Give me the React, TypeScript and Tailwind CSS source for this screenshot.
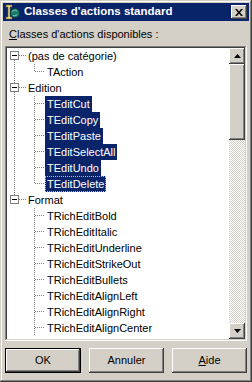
import React from "react";

const font = { fontFamily: '"Liberation Sans", Arial, sans-serif' };

type Node = { label: string; selected?: boolean; children: { label: string; selected?: boolean; focus?: boolean }[] };

const tree: Node[] = [
  { label: "(pas de catégorie)", children: [{ label: "TAction" }] },
  {
    label: "Edition",
    children: [
      { label: "TEditCut", selected: true },
      { label: "TEditCopy", selected: true },
      { label: "TEditPaste", selected: true },
      { label: "TEditSelectAll", selected: true },
      { label: "TEditUndo", selected: true },
      { label: "TEditDelete", selected: true, focus: true },
    ],
  },
  {
    label: "Format",
    children: [
      { label: "TRichEditBold" },
      { label: "TRichEditItalic" },
      { label: "TRichEditUnderline" },
      { label: "TRichEditStrikeOut" },
      { label: "TRichEditBullets" },
      { label: "TRichEditAlignLeft" },
      { label: "TRichEditAlignRight" },
      { label: "TRichEditAlignCenter" },
    ],
  },
];

const dot = { stroke: "#808080", strokeWidth: 1, strokeDasharray: "1 1" };

const RootGuide = ({ first, last }: { first: boolean; last: boolean }) => (
  <svg width="19" height="16" className="shrink-0">
    {!first && <line x1="7.5" y1="0" x2="7.5" y2="3" {...dot} />}
    {!last && <line x1="7.5" y1="12" x2="7.5" y2="16" {...dot} />}
    <line x1="12" y1="7.5" x2="19" y2="7.5" {...dot} />
    <rect x="3.5" y="3.5" width="8" height="8" fill="#fff" stroke="#808080" />
    <line x1="5" y1="7.5" x2="10" y2="7.5" stroke="#000" />
  </svg>
);

const ChildGuide = ({ rootLast, last }: { rootLast: boolean; last: boolean }) => (
  <svg width="38" height="16" className="shrink-0">
    {!rootLast && <line x1="7.5" y1="0" x2="7.5" y2="16" {...dot} />}
    <line x1="27.5" y1="0" x2="27.5" y2={last ? 8 : 16} {...dot} />
    <line x1="28" y1="7.5" x2="37" y2="7.5" {...dot} />
  </svg>
);

const Label = ({ text, selected, focus }: { text: string; selected?: boolean; focus?: boolean }) => (
  <span
    className={
      "h-[16px] px-[2px] flex items-center whitespace-nowrap leading-none " +
      (selected ? "bg-[#0a246a] text-white " : "text-black ") +
      (focus ? "outline outline-1 outline-dotted outline-[#d4c060] -outline-offset-1" : "")
    }
  >
    {text}
  </span>
);

const Raised = "shadow-[inset_-1px_-1px_#404040,inset_1px_1px_#fff,inset_-2px_-2px_#808080,inset_2px_2px_#d4d0c8] bg-[#d4d0c8]";

const Arrow = ({ up }: { up?: boolean }) => (
  <svg width="7" height="4" viewBox="0 0 7 4">
    <polygon points={up ? "3.5,0 7,4 0,4" : "0,0 7,0 3.5,4"} fill="#000" />
  </svg>
);

export default function App() {
  return (
    <div className="w-[252px] h-[382px] bg-[#d4d0c8] text-[11px]" style={font}>
      <div className="w-full h-full flex flex-col p-[1px] shadow-[inset_-1px_-1px_#404040,inset_1px_1px_#d4d0c8,inset_-2px_-2px_#808080,inset_2px_2px_#fff]">
        <div className="m-[2px] mb-0 h-[18px] shrink-0 bg-[#0a246a] flex items-center pl-[2px] pr-[2px] gap-[3px]">
          <svg width="16" height="16" viewBox="0 0 16 16" className="shrink-0">
            <path d="M1 1h6v2H5v10h2v2H1v-2h2V3H1z" fill="#e8d890" stroke="#6b5a20" strokeWidth="0.6" />
            <circle cx="10" cy="9" r="4.6" fill="#1a7a6a" stroke="#0b3b33" strokeWidth="0.8" />
            <path d="M7 7.5c1.5-1.5 3.5-1.8 5-0.5M8 11.5c1.5 0.5 3 0.3 4.5-1" stroke="#7fd0c0" strokeWidth="1" fill="none" />
          </svg>
          <span className="text-white font-bold text-[11.5px] flex-1 leading-none">Classes d'actions standard</span>
          <button className={Raised + " w-[16px] h-[14px] flex items-center justify-center"}>
            <svg width="8" height="7" viewBox="0 0 8 7">
              <path d="M0 0h2l2 2.5L6 0h2L5 3.5 8 7H6L4 4.5 2 7H0l3-3.5z" fill="#000" />
            </svg>
          </button>
        </div>

        <div className="px-[4px] flex flex-col flex-1">
          <div className="h-[25px] shrink-0 pl-[4px] pt-[8px] leading-none text-black">
            <span className="underline">C</span>lasses d'actions disponibles :
          </div>

          <div className="h-[295px] shrink-0 flex p-[2px] bg-white shadow-[inset_-1px_-1px_#fff,inset_1px_1px_#808080,inset_-2px_-2px_#d4d0c8,inset_2px_2px_#404040]">
            <div className="flex-1 overflow-hidden flex flex-col">
              {tree.map((root, ri) => {
                const rootLast = ri === tree.length - 1;
                return (
                  <React.Fragment key={root.label}>
                    <div className="flex h-[16px] shrink-0">
                      <RootGuide first={ri === 0} last={rootLast} />
                      <Label text={root.label} />
                    </div>
                    {root.children.map((c, ci) => (
                      <div key={c.label} className="flex h-[16px] shrink-0">
                        <ChildGuide rootLast={rootLast} last={rootLast ? false : ci === root.children.length - 1} />
                        <Label text={c.label} selected={c.selected} focus={c.focus} />
                      </div>
                    ))}
                  </React.Fragment>
                );
              })}
            </div>
            <div className="w-[16px] flex flex-col">
              <div className={Raised + " h-[16px] flex items-center justify-center"}>
                <Arrow up />
              </div>
              <div className={Raised + " h-[76px]"} />
              <div className="flex-1 bg-[repeating-conic-gradient(#d4d0c8_0_25%,#fff_0_50%)] bg-[length:2px_2px]" />
              <div className={Raised + " h-[16px] flex items-center justify-center"}>
                <Arrow />
              </div>
            </div>
          </div>

          <div className="flex justify-between mt-[7px] shrink-0">
            <button className="w-[76px] h-[25px] border border-black">
              <div className={Raised + " w-full h-full flex items-center justify-center text-black leading-none"}>OK</div>
            </button>
            <button className={Raised + " w-[75px] h-[25px] flex items-center justify-center text-black leading-none"}>Annuler</button>
            <button className={Raised + " w-[75px] h-[25px] flex items-center justify-center text-black leading-none"}>
              <span>
                <span className="underline">A</span>ide
              </span>
            </button>
          </div>
        </div>
      </div>
    </div>
  );
}
